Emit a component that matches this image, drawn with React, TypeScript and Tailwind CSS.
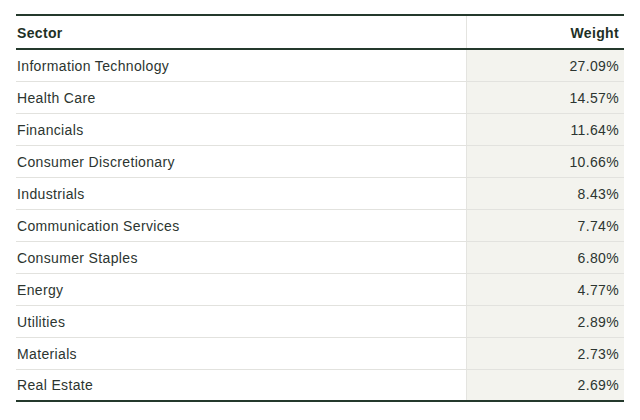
import React from 'react';

const rows: [string, string][] = [
  ['Information Technology', '27.09%'],
  ['Health Care', '14.57%'],
  ['Financials', '11.64%'],
  ['Consumer Discretionary', '10.66%'],
  ['Industrials', '8.43%'],
  ['Communication Services', '7.74%'],
  ['Consumer Staples', '6.80%'],
  ['Energy', '4.77%'],
  ['Utilities', '2.89%'],
  ['Materials', '2.73%'],
  ['Real Estate', '2.69%'],
];

const App = () => {
  return (
    <div className="w-[640px] h-[420px] bg-white px-4 pt-[14px] font-['Liberation_Sans',sans-serif] text-[14px] tracking-[0.35px]">
      <div className="border-t-2 border-b-2 border-[#24392c]">
        <div className="flex h-[34px] border-b-2 border-[#24392c] font-bold text-[#1e3025]">
          <div className="flex-1 flex items-center pl-px pt-[2px]">Sector</div>
          <div className="w-[158px] flex items-center justify-end pr-[5px] pt-[2px] border-l border-[#e4e4e0]">Weight</div>
        </div>
        {rows.map(([name, weight], i) => {
          const last = i === rows.length - 1;
          return (
            <div
              key={name}
              className={`flex text-[#2c3530] ${last ? 'h-[30px]' : 'h-[32px] border-b border-[#e2e2de]'}`}
            >
              <div className="flex-1 flex items-center pl-px pt-px">{name}</div>
              <div className="w-[158px] flex items-center justify-end pr-[5px] pt-px bg-[#f3f3ee] border-l border-[#e4e4e0]">{weight}</div>
            </div>
          );
        })}
      </div>
    </div>
  );
};

export default App;
